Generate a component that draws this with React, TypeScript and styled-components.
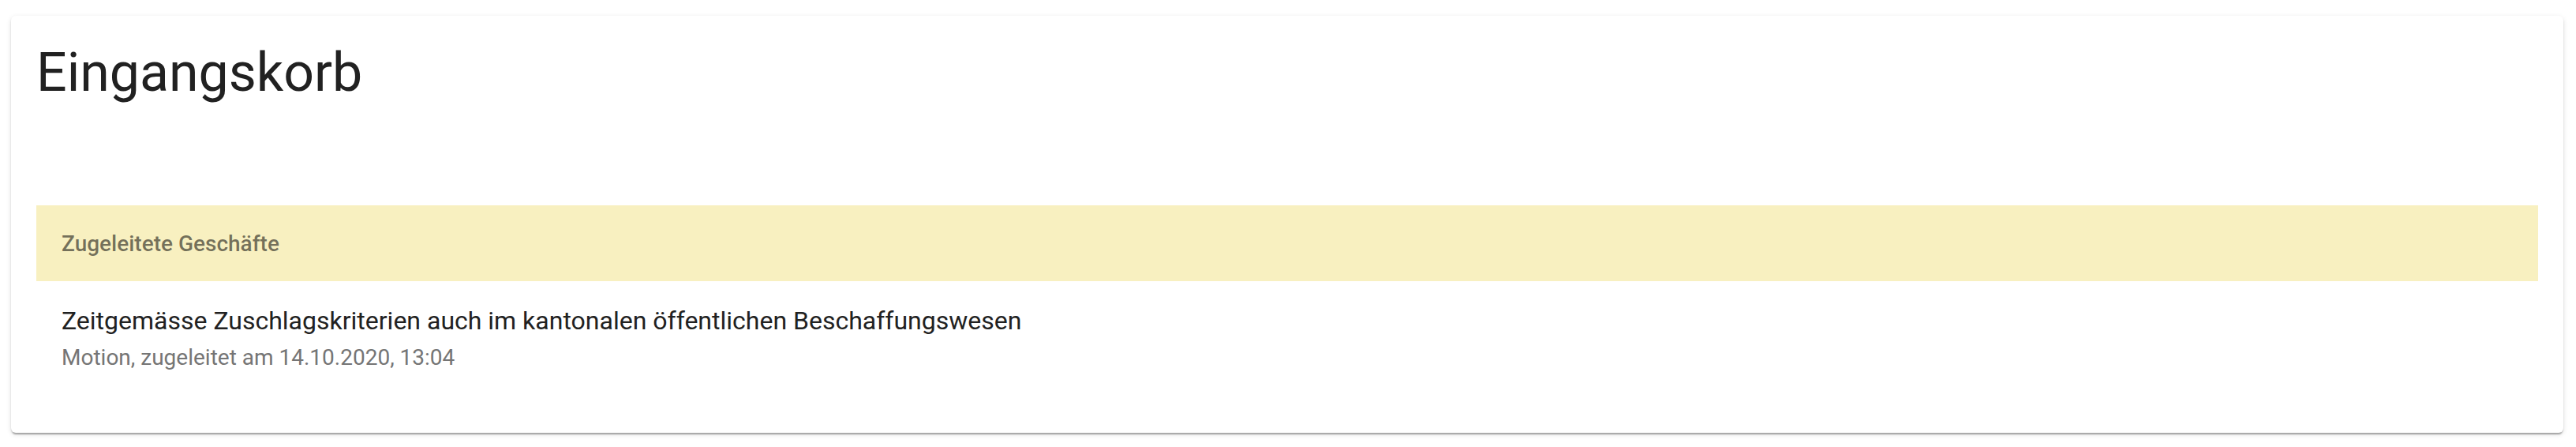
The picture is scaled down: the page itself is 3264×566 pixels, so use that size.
import styled, { createGlobalStyle } from 'styled-components';

const GlobalStyle = createGlobalStyle`
  html, body {
    margin: 0;
    padding: 0;
    background: #fff;
    font-family: Roboto, "Liberation Sans", Arial, sans-serif;
  }
`;

const Page = styled.div`
  padding: 20px 16px 18px 14px;
`;

const Card = styled.section`
  background: #fff;
  border-radius: 6px;
  padding: 32px 32px 75px;
  box-shadow: 0px 4px 2px -2px rgba(0, 0, 0, 0.2), 0px 2px 2px 0px rgba(0, 0, 0, 0.14), 0px 2px 6px 0px rgba(0, 0, 0, 0.12);
`;

const Title = styled.h1`
  margin: 0 0 128px;
  font-size: 68px;
  line-height: 80px;
  font-weight: 400;
  color: #212121;
`;

const GroupHeader = styled.div`
  display: flex;
  align-items: center;
  height: 96px;
  padding: 0 32px;
  background: #f8f0c0;
  font-size: 28px;
  font-weight: 500;
  color: rgba(0, 0, 0, 0.54);
`;

const Item = styled.div`
  display: flex;
  flex-direction: column;
  gap: 5px;
  padding: 28px 32px 0;
`;

const ItemTitle = styled.div`
  font-size: 32px;
  line-height: 44px;
  color: #212121;
`;

const ItemMeta = styled.div`
  font-size: 28px;
  line-height: 40px;
  color: #757575;
`;

export default function App() {
  return (
    <Page>
      <GlobalStyle />
      <Card>
        <Title>Eingangskorb</Title>
        <GroupHeader>Zugeleitete Geschäfte</GroupHeader>
        <Item>
          <ItemTitle>Zeitgemässe Zuschlagskriterien auch im kantonalen öffentlichen Beschaffungswesen</ItemTitle>
          <ItemMeta>Motion, zugeleitet am 14.10.2020, 13:04</ItemMeta>
        </Item>
      </Card>
    </Page>
  );
}
